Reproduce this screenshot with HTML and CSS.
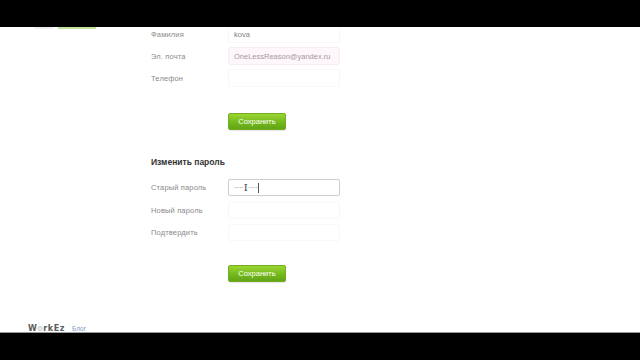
FILE: index.html
```html
<!DOCTYPE html>
<html lang="ru">
<head>
<meta charset="utf-8">
<title>Профиль</title>
<link rel="stylesheet" href="styles.css">
</head>
<body>
<div class="frame">
  <div class="letterbox"></div>
  <div class="screen">
    <div class="header-strip">
      <span class="hs-gray"></span>
      <span class="hs-green"></span>
    </div>
    <div class="form">
      <div class="row">
        <span class="label">Фамилия</span>
        <span class="input">kova</span>
      </div>
      <div class="row">
        <span class="label">Эл. почта</span>
        <span class="input input-auto">OneLessReason@yandex.ru</span>
      </div>
      <div class="row">
        <span class="label">Телефон</span>
        <span class="input"></span>
      </div>
      <div class="actions first">
        <button class="btn">Сохранить</button>
      </div>
      <h2 class="section-title">Изменить пароль</h2>
      <div class="row pw">
        <span class="label">Старый пароль</span>
        <span class="input input-focus"><span class="dots">·····</span><span class="ibeam">I</span><span class="dots">·····</span><span class="caret"></span></span>
      </div>
      <div class="row pw">
        <span class="label">Новый пароль</span>
        <span class="input"></span>
      </div>
      <div class="row pw">
        <span class="label">Подтвердить</span>
        <span class="input"></span>
      </div>
      <div class="actions second">
        <button class="btn">Сохранить</button>
      </div>
    </div>
    <div class="footer">
      <span class="logo">W<span class="logo-o">o</span>rkEz</span>
      <a class="blog" href="#">Блог</a>
    </div>
  </div>
  <div class="letterbox bottom"></div>
</div>
</body>
</html>
```
FILE: styles.css
```css
* { box-sizing: border-box; }
html, body { margin: 0; padding: 0; background: #000; }
body { font-family: "Liberation Sans", Arial, sans-serif; }
.frame { width: 640px; height: 360px; display: flex; flex-direction: column; }
.letterbox { height: 27px; background: #000; flex: none; }
.letterbox.bottom { height: 28px; border-top: 1px solid #9a9a9a; }
.screen { flex: 1; background: #fff; overflow: hidden; position: relative; display: flex; flex-direction: column; }
.header-strip { height: 2px; display: flex; gap: 5px; padding-left: 35px; flex: none; }
.hs-gray { width: 18px; background: #eeeeee; }
.hs-green { width: 38px; background: #c2e49a; }
.form { padding-left: 151px; margin-top: -4px; flex: none; }
.row { display: flex; align-items: center; height: 18px; margin-bottom: 4px; }
.row.pw { height: 17px; margin-bottom: 5.5px; }
.label { width: 77px; font-size: 7.5px; color: #8a8a8a; letter-spacing: 0.15px; }
.input { width: 112px; height: 100%; border: 1px solid #f8f8f8; border-radius: 2px; padding-left: 5px; display: flex; align-items: center; font-size: 7.5px; color: #808080; background: #fff; }
.input-auto { background: #fdf6fa; border-color: #f8eef4; color: #a896a2; }
.input-focus { border-color: #cfcfcf; box-shadow: 0 0 1px rgba(0,0,0,0.08); color: #777; }
.dots { font-size: 7px; letter-spacing: -0.5px; color: #777; }
.ibeam { font-family: "DejaVu Serif", serif; font-size: 10px; color: #444; margin: 0 0.5px; line-height: 1; }
.caret { width: 1px; height: 10px; background: #555; margin-left: 1px; }
.actions { padding-left: 77px; }
.actions.first { margin-top: 26px; }
.actions.second { margin-top: 24px; }
.btn { width: 58px; height: 17px; border: 1px solid #74ac22; border-radius: 2px; background: linear-gradient(#9bd632, #74b91d 55%, #62a416); color: #fff; font-family: "Liberation Sans", Arial, sans-serif; font-size: 7.5px; padding: 0; display: block; box-shadow: 0 1px 1px rgba(0,0,0,0.1); }
.section-title { font-size: 8.5px; font-weight: bold; color: #333; margin: 26px 0 11px; height: 12px; line-height: 12px; }
.footer { margin-top: auto; height: 8px; padding-left: 28px; display: flex; align-items: flex-start; gap: 7px; flex: none; }
.logo { font-family: "DejaVu Sans", sans-serif; font-weight: bold; font-size: 8px; color: #5a5a5a; letter-spacing: 0.6px; }
.logo-o { color: #d0d0d0; }
.blog { font-size: 6.5px; color: #7f97c4; text-decoration: none; padding-top: 1px; }
```
